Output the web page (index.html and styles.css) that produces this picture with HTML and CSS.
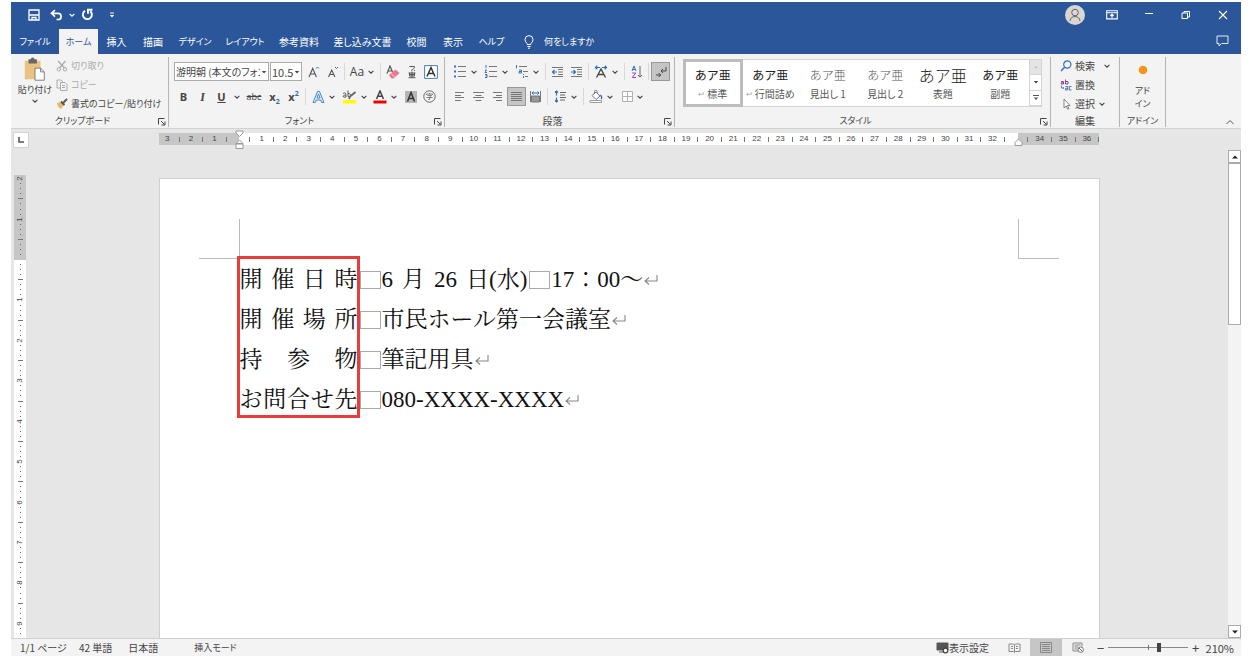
FILE: index.html
```html
<!DOCTYPE html>
<html lang="ja">
<head>
<meta charset="utf-8">
<title>文書</title>
<link rel="stylesheet" href="styles.css">
</head>
<body>
<svg class="defs" aria-hidden="true">
  <symbol id="chev" viewBox="0 0 8 8"><path d="M1.6 2.8 4 5.2 6.4 2.8" fill="none" stroke="currentColor" stroke-width="1.1"/></symbol>
  <symbol id="caret" viewBox="0 0 8 8"><path d="M1.8 3h4.4L4 5.4z" fill="currentColor"/></symbol>
  <symbol id="launch" viewBox="0 0 8 8"><path d="M.5 6.500V.5h6M3 3l3.500 3.500M7 3.500V7H3.500" fill="none" stroke="currentColor"/></symbol>
  <symbol id="ret" viewBox="0 0 16 14"><path d="M14 2v6H2M6 4.500 2 8l4 3.500" fill="none" stroke="currentColor" stroke-width="1.1"/></symbol>
</svg>
<div class="app">
  <header class="titlebar">
    <div class="quick">
      <button class="tb-btn" aria-label="上書き保存"><svg width="12" height="12" viewBox="0 0 12 12"><path d="M1 1h10v10H1zM1 6h10M4 11V8.500h4V11" fill="none" stroke="#fff" stroke-width="1.300"/></svg></button>
      <button class="tb-btn" aria-label="元に戻す"><svg width="13" height="12" viewBox="0 0 13 12"><path d="M5 1 1.500 4.300 5 7.600M1.500 4.300H8a3 3 0 0 1 0 6.200H6.500" fill="none" stroke="#fff" stroke-width="1.700"/></svg></button>
      <button class="tb-chev" aria-label="元に戻す履歴"><svg width="8" height="8"><use href="#chev"/></svg></button>
      <button class="tb-btn redo" aria-label="繰り返し"><svg width="13" height="13" viewBox="0 0 13 13"><path d="M4 2.800A4.500 4.500 0 1 0 9.300 3.200M7 5.800V1.700h4.500" fill="none" stroke="#fff" stroke-width="1.900"/></svg></button>
      <button class="tb-btn" aria-label="クイックアクセスのカスタマイズ"><svg width="8" height="8" viewBox="0 0 8 8"><path d="M2 2h4" stroke="#fff"/><path d="M1.800 4h4.400L4 6.400z" fill="#fff"/></svg></button>
    </div>
    <div class="window-tools">
      <button class="avatar" aria-label="アカウント"><svg width="20" height="20" viewBox="0 0 20 20"><circle cx="10" cy="10" r="10" fill="#d9d6d3"/><circle cx="10" cy="7.500" r="3.300" fill="none" stroke="#666"/><path d="M5 16c0-6 10-6 10 0" fill="none" stroke="#666"/></svg></button>
      <button class="win-btn" aria-label="リボンの表示オプション"><svg width="12" height="10" viewBox="0 0 12 10"><path d="M.7.7h10.600v8.200H.7zM.7 2.700h10.600M6 8V4.300M4.200 6 6 4.200 7.800 6" fill="none" stroke="#fff" stroke-width="1.100"/></svg></button>
      <button class="win-btn" aria-label="最小化"><svg width="10" height="10" viewBox="0 0 10 10"><path d="M1 3.500h8" stroke="#fff"/></svg></button>
      <button class="win-btn" aria-label="元のサイズに戻す"><svg width="10" height="10" viewBox="0 0 10 10"><path d="M1 3h5.500v5.500H1zM3 3V1.500h5.500V7H6.500" fill="none" stroke="#fff"/></svg></button>
      <button class="win-btn" aria-label="閉じる"><svg width="10" height="10" viewBox="0 0 10 10"><path d="m1 1 8 8M9 1 1 9" stroke="#fff" stroke-width="1.100"/></svg></button>
    </div>
  </header>

  <nav class="tabbar">
    <div class="tabs">
      <button class="tab kana">ファイル</button>
      <button class="tab kana active">ホーム</button>
      <button class="tab">挿入</button>
      <button class="tab">描画</button>
      <button class="tab kana">デザイン</button>
      <button class="tab kana">レイアウト</button>
      <button class="tab">参考資料</button>
      <button class="tab">差し込み文書</button>
      <button class="tab">校閲</button>
      <button class="tab">表示</button>
      <button class="tab kana">ヘルプ</button>
    </div>
    <button class="tell kana"><svg width="10" height="14" viewBox="0 0 10 14"><path d="M3.200 9.500C3.200 7.800 1 7 1 4.600a4 4 0 0 1 8 0C9 7 6.800 7.800 6.800 9.500zM3.400 11.500h3.200M4 13.200h2" fill="none" stroke="#fff"/></svg>何をしますか</button>
    <button class="win-btn comment" aria-label="コメント"><svg width="13" height="12" viewBox="0 0 13 12"><path d="M1 1h11v7.500H5.500L3 11V8.500H1z" fill="none" stroke="#e4ebf5"/></svg></button>
  </nav>

  <section class="ribbon">
    <div class="group g-clip">
      <div class="clip-body">
        <button class="paste kana">
          <svg width="26" height="26" viewBox="0 0 26 28"><path d="M2 4h17v20H2z" fill="#eac282"/><path d="M6 2.500h2.500a2 2 0 0 1 4 0H15V7H6z" fill="#666"/><path d="M13 12h6l4 4v9H13z" fill="#fff" stroke="#777"/><path d="M19 12v4h4" fill="none" stroke="#777"/></svg>
          <span>貼り付け</span>
          <svg width="8" height="8"><use href="#chev"/></svg>
        </button>
        <div class="clip-list kana">
          <button class="item off"><svg width="12" height="12" viewBox="0 0 12 12"><path d="m2 1 6.500 7M9.500 1 3.500 8" stroke="#aaa" stroke-width="1.300"/><circle cx="2.800" cy="9.300" r="1.700" fill="none" stroke="#aaa"/><circle cx="9" cy="9.300" r="1.700" fill="none" stroke="#aaa"/></svg>切り取り</button>
          <button class="item off"><svg width="12" height="12" viewBox="0 0 12 12"><path d="M4 9H1V1h4l2 2v1M4.500 3.500H9l2 2v6H4.500zM6 6.500h3M6 8.500h3" fill="none" stroke="#aaa"/></svg>コピー</button>
          <button class="item"><svg width="12" height="12" viewBox="0 0 12 12"><path d="m1 5 4-1 3 3-3 4c-2-1-4-3-4-6z" fill="#e9b96a"/><path d="m5 3.500 3.500 3.500M7.500 4.500 11 1" stroke="#555" stroke-width="1.800"/></svg>書式のコピー/貼り付け</button>
        </div>
      </div>
      <div class="caption kana">クリップボード<button class="launch" aria-label="クリップボードの詳細"><svg width="8" height="8"><use href="#launch"/></svg></button></div>
    </div>

    <div class="group g-font">
      <div class="rows">
        <div class="row">
          <label class="combo name"><select aria-label="フォント"><option>游明朝 (本文のフォント)</option></select><svg width="8" height="8"><use href="#caret"/></svg></label>
          <label class="combo size"><select aria-label="フォント サイズ"><option>10.5</option></select><svg width="8" height="8"><use href="#caret"/></svg></label>
          <button class="btn" aria-label="フォントの拡大"><svg width="12" height="14" viewBox="0 0 12 14"><path d="M1 12 4.700 3.500 8.400 12M2.300 9h4.800" fill="none" stroke="#555" stroke-width="1.100"/><path d="M8 3.500 9.500 2 11 3.500" fill="none" stroke="#2f6db5"/></svg></button>
          <button class="btn" aria-label="フォントの縮小"><svg width="12" height="14" viewBox="0 0 12 14"><path d="M1.500 12 4.700 5 7.900 12M2.700 9.500h4" fill="none" stroke="#555" stroke-width="1.100"/><path d="M8 2 9.500 3.500 11 2" fill="none" stroke="#2f6db5"/></svg></button>
          <i class="sep"></i>
          <button class="btn drop"><span class="glyph">Aa</span><svg width="8" height="8"><use href="#chev"/></svg></button>
          <i class="sep"></i>
          <button class="btn" aria-label="書式のクリア"><svg width="14" height="14" viewBox="0 0 14 14"><path d="M1 8.500 4 1l2.500 6M2 6h4" fill="none" stroke="#555" stroke-width="1.200"/><path d="m3 10 6.500-5.500 4 3.500-6 5.500H5.500z" fill="#e8798c"/><path d="m5 8.500 4 4" stroke="#fbd9df"/></svg></button>
          <button class="btn" aria-label="ルビ"><svg width="12" height="14" viewBox="0 0 12 14"><path d="M3.500 1.500h5C8.500 3.500 7 4.500 5 5.500M8 5l1 .8M2.500 8h7M6 6.500v6M3.500 8v3h5V8M3.500 9.500h5M2.500 12.700h7" fill="none" stroke="#555"/></svg></button>
          <button class="btn" aria-label="囲み線"><svg width="14" height="14" viewBox="0 0 14 14"><path d="M.6.600h12.800v12.800H.6z" fill="#fff" stroke="#4a7ebb"/><path d="M3 11.500 7 2.500l4 9M4.300 8.500h5.400" fill="none" stroke="#333" stroke-width="1.500"/></svg></button>
        </div>
        <div class="row">
          <button class="btn"><b class="glyph">B</b></button>
          <button class="btn"><i class="glyph ital">I</i></button>
          <button class="btn"><b class="glyph under">U</b></button>
          <button class="chev-btn" aria-label="下線の種類"><svg width="8" height="8"><use href="#chev"/></svg></button>
          <button class="btn wide"><s class="glyph tiny">abc</s></button>
          <button class="btn"><b class="glyph">x<sub class="blue">2</sub></b></button>
          <button class="btn"><b class="glyph">x<sup class="blue">2</sup></b></button>
          <i class="sep"></i>
          <button class="btn drop" aria-label="文字の効果"><svg width="13" height="14" viewBox="0 0 13 14"><path d="M1 12.500 5.500 1.500h2l4.500 11h-2.300L8.700 10H4.300l-1 2.500z" fill="#dce9f8" stroke="#4a86c8"/><path d="m5 8 1.500-4L8 8z" fill="#fff" stroke="#4a86c8"/></svg><svg width="8" height="8"><use href="#chev"/></svg></button>
          <button class="btn drop" aria-label="蛍光ペン"><svg width="15" height="14" viewBox="0 0 15 14"><path d="M1 3.500c2.500-1.500 3-.5 3 3.500-3.500 1-4-2 0-2M6 .5v6c3.500 1 3.500-3.500 0-3" fill="none" stroke="#555"/><path d="m7 9 1-2.500L13.500 2" fill="none" stroke="#666" stroke-width="1.800"/><path d="M1 10h13v3.500H1z" fill="#ff0"/></svg><svg width="8" height="8"><use href="#chev"/></svg></button>
          <button class="btn drop" aria-label="フォントの色"><svg width="14" height="14" viewBox="0 0 14 14"><path d="M3.500 9 7 1l3.500 8M4.700 6.200h4.600" fill="none" stroke="#444" stroke-width="1.500"/><path d="M.5 10.500h13v3H.5z" fill="#e00"/></svg><svg width="8" height="8"><use href="#chev"/></svg></button>
          <button class="btn" aria-label="文字の網かけ"><svg width="12" height="12" viewBox="0 0 12 12"><path d="M0 0h12v12H0z" fill="#b5b5b5"/><path d="m2.500 10.500 3.500-9 3.500 9M3.800 7.500h4.400" fill="none" stroke="#333" stroke-width="1.500"/></svg></button>
          <button class="btn" aria-label="囲い文字"><svg width="13" height="13" viewBox="0 0 13 13"><circle cx="6.500" cy="6.500" r="5.700" fill="none" stroke="#666"/><path d="M3.500 5V4h6v1M6.500 3v1M4.500 5.500h4l-2 1.500v2.500H5.300M3.500 7.500h6" fill="none" stroke="#666" stroke-width=".8"/></svg></button>
        </div>
      </div>
      <div class="caption kana">フォント<button class="launch" aria-label="フォントの詳細"><svg width="8" height="8"><use href="#launch"/></svg></button></div>
    </div>

    <div class="group g-para">
      <div class="rows">
        <div class="row">
          <button class="btn drop" aria-label="箇条書き"><svg width="14" height="13" viewBox="0 0 14 13"><path d="M5 1.500h8M5 6.500h8M5 11.500h8" stroke="#777"/><path d="M1 1.500h2M1 6.500h2M1 11.500h2" stroke="#3a74b8" stroke-width="1.800"/></svg><svg width="8" height="8"><use href="#chev"/></svg></button>
          <button class="btn drop" aria-label="段落番号"><svg width="14" height="13" viewBox="0 0 14 13"><path d="M5 1.500h8M5 6.500h8M5 11.500h8" stroke="#777"/><path d="M2 0v3M1 5h1.500L1 7.500h2M1 9.500h2v3H1M1.500 11H3" fill="none" stroke="#3a74b8"/></svg><svg width="8" height="8"><use href="#chev"/></svg></button>
          <button class="btn drop" aria-label="アウトライン"><svg width="14" height="13" viewBox="0 0 14 13"><path d="M4 1.500h8M8 6.500h5M10 11.500h3" stroke="#777"/><path d="M1.500 0v3.500M4 5h2.500v3H4V6.500h2.500M8.500 9v1M8.500 11v2" fill="none" stroke="#3a74b8"/></svg><svg width="8" height="8"><use href="#chev"/></svg></button>
          <i class="sep"></i>
          <button class="btn" aria-label="インデントを減らす"><svg width="13" height="12" viewBox="0 0 13 12"><path d="M1 1.500h11M7 3.500h5M7 6h5M7 8.500h5M1 10.500h11" stroke="#777"/><path d="M6 6H1.500M3.500 4l-2 2 2 2" fill="none" stroke="#2f6db5" stroke-width="1.200"/></svg></button>
          <button class="btn" aria-label="インデントを増やす"><svg width="13" height="12" viewBox="0 0 13 12"><path d="M1 1.500h11M7 3.500h5M7 6h5M7 8.500h5M1 10.500h11" stroke="#777"/><path d="M1 6h4.500M3.500 4l2 2-2 2" fill="none" stroke="#2f6db5" stroke-width="1.200"/></svg></button>
          <i class="sep"></i>
          <button class="btn drop" aria-label="拡張書式"><svg width="14" height="13" viewBox="0 0 14 13"><path d="M2.500 12.500 7 4l4.500 8.500M4 9.500h6" fill="none" stroke="#444" stroke-width="1.300"/><path d="M6 2.500H1.500M3.300.7 1.500 2.500l1.800 1.800M8 2.500h4.500M10.700.7l1.800 1.800-1.800 1.800" fill="none" stroke="#2f6db5" stroke-width="1.200"/></svg><svg width="8" height="8"><use href="#chev"/></svg></button>
          <i class="sep"></i>
          <button class="btn" aria-label="並べ替え"><svg width="12" height="14" viewBox="0 0 12 14"><path d="m1 6 2-5 2 5M1.700 4.500h2.600" fill="none" stroke="#2f6db5"/><path d="M1.200 8h3.600L1.200 12.500H5" fill="none" stroke="#a044b0"/><path d="M9 1v11M7 10l2 2.200 2-2.200" fill="none" stroke="#666"/></svg></button>
          <i class="sep"></i>
          <button class="btn on" aria-label="編集記号の表示"><svg width="12" height="12" viewBox="0 0 12 12"><path d="M11 1v4H6M8 3 6 5l2 2M1 9h4.500M3.700 7l2 2-2 2" fill="none" stroke="#444"/></svg></button>
        </div>
        <div class="row">
          <button class="btn" aria-label="左揃え"><svg width="11" height="9" viewBox="0 0 11 9"><path d="M1 .5h9M1 3.500h6M1 5.500h9M1 8.500h6" stroke="#777"/></svg></button>
          <button class="btn" aria-label="中央揃え"><svg width="11" height="9" viewBox="0 0 11 9"><path d="M0 .5h11M2.500 3.500h6M0 5.500h11M2.500 8.500h6" stroke="#777"/></svg></button>
          <button class="btn" aria-label="右揃え"><svg width="11" height="9" viewBox="0 0 11 9"><path d="M1 .5h9M4 3.500h6M1 5.500h9M4 8.500h6" stroke="#777"/></svg></button>
          <button class="btn on" aria-label="両端揃え"><svg width="11" height="9" viewBox="0 0 11 9"><path d="M0 .5h11M0 2.500h11M0 4.500h11M0 6.500h11M0 8.500h11" stroke="#777"/></svg></button>
          <button class="btn" aria-label="均等割り付け"><svg width="13" height="13" viewBox="0 0 13 13"><path d="M1.500 1v11M11.500 1v11" stroke="#777"/><path d="M2.500 6h8v6h-8z" fill="#999" stroke="#777"/><path d="M3 3h7M4.500 1.500 3 3l1.500 1.500M8.500 1.500 10 3 8.500 4.500" fill="none" stroke="#2f6db5"/></svg></button>
          <i class="sep"></i>
          <button class="btn drop" aria-label="行間"><svg width="13" height="13" viewBox="0 0 13 13"><path d="M6 2.500h6M6 5h5M6 7.500h6M6 10h5" stroke="#666"/><path d="M2.500 1v4.500M1 2.500 2.500 1 4 2.500M2.500 7.500V12M1 10.500 2.500 12 4 10.500" fill="none" stroke="#2f6db5" stroke-width="1.200"/></svg><svg width="8" height="8"><use href="#chev"/></svg></button>
          <i class="sep"></i>
          <button class="btn drop" aria-label="塗りつぶし"><svg width="14" height="13" viewBox="0 0 14 13"><path d="M3 5.500 7 2l4 4-4 3.500zM5.500 4V1.500a1.200 1.200 0 0 1 2.500 0V3" fill="#fff" stroke="#777"/><path d="M11.500 5c1.500 2 1.500 3.500.5 4" fill="none" stroke="#2f6db5" stroke-width="1.300"/><path d="M1 10.500h11.500v2H1z" fill="#fff" stroke="#888" stroke-width=".8"/></svg><svg width="8" height="8"><use href="#chev"/></svg></button>
          <button class="btn drop" aria-label="罫線"><svg width="11" height="11" viewBox="0 0 11 11"><path d="M.5.500h10v10H.5zM5.500.5v10M.5 5.500h10" fill="#fff" stroke="#b0b0b0"/></svg><svg width="8" height="8"><use href="#chev"/></svg></button>
        </div>
      </div>
      <div class="caption">段落<button class="launch" aria-label="段落の詳細"><svg width="8" height="8"><use href="#launch"/></svg></button></div>
    </div>

    <div class="group g-style">
      <div class="gallery">
        <button class="style sel"><span class="sample">あア亜</span><span class="style-name"><svg width="6" height="6" viewBox="0 0 16 14"><use href="#ret"/></svg>標準</span></button>
        <button class="style"><span class="sample">あア亜</span><span class="style-name"><svg width="6" height="6" viewBox="0 0 16 14"><use href="#ret"/></svg>行間詰め</span></button>
        <button class="style"><span class="sample light">あア亜</span><span class="style-name">見出し 1</span></button>
        <button class="style"><span class="sample light">あア亜</span><span class="style-name">見出し 2</span></button>
        <button class="style"><span class="sample big">あア亜</span><span class="style-name">表題</span></button>
        <button class="style"><span class="sample">あア亜</span><span class="style-name">副題</span></button>
        <div class="gal-scroll">
          <button class="dim" aria-label="前の行"><svg width="8" height="8" viewBox="0 0 8 8"><path d="M2.500 4.800h3L4 3.300z" fill="#aaa"/></svg></button>
          <button aria-label="次の行"><svg width="8" height="8"><use href="#caret"/></svg></button>
          <button aria-label="その他"><svg width="8" height="8" viewBox="0 0 8 8"><path d="M1 1.500h6" stroke="#555"/><path d="M1.800 3.500h4.400L4 6z" fill="#555"/></svg></button>
        </div>
      </div>
      <div class="caption kana">スタイル<button class="launch" aria-label="スタイルの詳細"><svg width="8" height="8"><use href="#launch"/></svg></button></div>
    </div>

    <div class="group g-edit">
      <div class="clip-list">
        <button class="item"><svg width="12" height="12" viewBox="0 0 12 12"><circle cx="7.300" cy="4.500" r="3.600" fill="none" stroke="#2f6db5" stroke-width="1.200"/><path d="M4.600 7.200 1 11" stroke="#2f6db5" stroke-width="1.400"/></svg>検索<svg class="far" width="8" height="8"><use href="#chev"/></svg></button>
        <button class="item"><svg width="12" height="12" viewBox="0 0 12 12"><path d="M1 2.500h2.500V5H1.200V3.800h2.300M5.500.500V5H8V2.500H5.500" fill="none" stroke="#8d3fae"/><path d="M1.500 6.500v2.500h2M2.800 8l1 1-1 1" fill="none" stroke="#2f6db5" stroke-width=".8"/><path d="M5.500 7.500h2.200V11H5.500V9.300h2.200M11.500 7.500H9.300V11h2.200" fill="none" stroke="#5577aa"/></svg>置換</button>
        <button class="item"><svg width="12" height="12" viewBox="0 0 12 12"><path d="M4 1v9l2.200-2 1.500 3.300 1.200-.6-1.500-3.200H10z" fill="#fff" stroke="#777" stroke-width=".9"/></svg>選択<svg width="8" height="8"><use href="#chev"/></svg></button>
      </div>
      <div class="caption">編集</div>
    </div>

    <div class="group g-addin">
      <button class="addin kana"><svg width="10" height="10" viewBox="0 0 10 10"><circle cx="5" cy="5" r="4.300" fill="#f7941d"/></svg><span>アド<br>イン</span></button>
      <div class="caption kana">アドイン</div>
    </div>
    <button class="collapse" aria-label="リボンを折りたたむ"><svg width="10" height="8" viewBox="0 0 10 8"><path d="M1.500 6 5 2.500 8.500 6" fill="none" stroke="#555"/></svg></button>
  </section>

  <div class="ruler-bar">
    <button class="tab-kind" aria-label="タブの種類"><svg width="6" height="6" viewBox="0 0 6 6"><path d="M1 0v5h5" fill="none" stroke="#555" stroke-width="1.600"/></svg></button>
    <div class="ruler-track">
      <div class="ruler">
        <div class="ruler-clip"><div class="h-strip" id="h-strip"></div></div>
        <svg class="marker left" width="9" height="20" viewBox="0 0 9 20"><path d="M1 1h7v2L4.500 6.500 1 3zM4.500 10 8 13.500H1zM1 14h7v4.500H1z" fill="#fff" stroke="#999"/></svg>
        <svg class="marker right" width="9" height="9" viewBox="0 0 9 9"><path d="M4.500 1 8 4.500v3H1v-3z" fill="#fff" stroke="#999"/></svg>
      </div>
    </div>
  </div>

  <main class="work">
    <div class="v-ruler"><div class="v-strip" id="v-strip"></div></div>
    <div class="canvas">
      <article class="page">
        <div class="corners"><i class="corner tl"></i><i class="corner tr"></i></div>
        <div class="doc">
          <p class="line"><span class="key"><span>開</span><span>催</span><span>日</span><span>時</span></span><i class="space"></i><span class="mixed"><span>6</span><span>月</span><span>26</span><span>日(水)</span></span><i class="space"></i><span>17：00～</span><svg class="ret" width="16" height="14"><use href="#ret"/></svg></p>
          <p class="line"><span class="key"><span>開</span><span>催</span><span>場</span><span>所</span></span><i class="space"></i><span>市民ホール第一会議室</span><svg class="ret" width="16" height="14"><use href="#ret"/></svg></p>
          <p class="line"><span class="key"><span>持</span><span>参</span><span>物</span></span><i class="space"></i><span>筆記用具</span><svg class="ret" width="16" height="14"><use href="#ret"/></svg></p>
          <p class="line"><span class="key"><span>お</span><span>問</span><span>合</span><span>せ</span><span>先</span></span><i class="space"></i><span>080-XXXX-XXXX</span><svg class="ret" width="16" height="14"><use href="#ret"/></svg></p>
          <div class="highlight"></div>
        </div>
      </article>
    </div>
    <div class="scroll">
      <button aria-label="上へスクロール"><svg width="8" height="8" viewBox="0 0 8 8"><path d="M1 5.500h6L4 2.500z" fill="#222"/></svg></button>
      <div class="rail"><div class="thumb"></div></div>
      <button aria-label="下へスクロール"><svg width="8" height="8" viewBox="0 0 8 8"><path d="M1 2.500h6L4 5.500z" fill="#222"/></svg></button>
    </div>
  </main>

  <footer class="status">
    <span class="pages">1/1 ページ</span><span>42 単語</span><span class="lang">日本語</span><span class="kana">挿入モード</span>
    <div class="views">
      <button class="display"><svg width="13" height="12" viewBox="0 0 13 12"><path d="M1 1h11v7H1zM3 10h5" fill="#555" stroke="#555"/><circle cx="9.500" cy="8.500" r="2.300" fill="#fff" stroke="#444" stroke-width="1.300"/></svg>表示設定</button>
      <button class="view" aria-label="閲覧モード"><svg width="13" height="10" viewBox="0 0 13 10"><path d="M1 1h4.500l1 1 1-1H12v7.500H7.500l-1 1-1-1H1zM6.500 2v7M3 3.500h2M3 5.500h2M8 3.500h2M8 5.500h2" fill="none" stroke="#888"/></svg></button>
      <button class="view cur" aria-label="印刷レイアウト"><svg width="12" height="11" viewBox="0 0 12 11"><path d="M.5.500h11v10H.5zM2 2.500h8M2 4.500h8M2 6.500h8M2 8.500h8" fill="none" stroke="#888"/></svg></button>
      <button class="view" aria-label="Web レイアウト"><svg width="12" height="11" viewBox="0 0 12 11"><path d="M6 9H1V1h9v3.500M2.500 3h6M2.500 5h4M2.500 7h3" fill="none" stroke="#888"/><circle cx="8.700" cy="7.700" r="2.700" fill="#fff" stroke="#777"/><path d="m7 6 3.500 3.500" stroke="#777"/></svg></button>
      <button class="zoom-btn" aria-label="縮小">−</button>
      <input class="zoom" type="range" min="0" max="100" value="65" aria-label="ズーム">
      <button class="zoom-btn" aria-label="拡大">+</button>
      <span class="percent">210%</span>
    </div>
  </footer>
</div>
<script src="rulers.js"></script>
</body>
</html>
```
FILE: rulers.js
```js
// Horizontal ruler: one cell per character, counted from the left margin.
const h = document.getElementById('h-strip');
for (let n = -3; n <= 36; n++) {
  const cell = document.createElement('div');
  cell.className = 'h-cell';
  const label = document.createElement('span');
  label.textContent = n === 0 || n === 33 ? '' : Math.abs(n);
  cell.append(label);
  h.append(cell);
}
// Vertical ruler: a half-unit dash, then dots on both sides of each number.
const v = document.getElementById('v-strip');
for (let n = -2; n <= 9; n++) {
  const cell = document.createElement('div');
  cell.className = 'v-cell';
  for (const kind of ['dash', 'dot', 'dot', 'dot', 'num', 'dot', 'dot', 'dot']) {
    const mark = document.createElement('span');
    mark.className = kind;
    if (kind === 'num' && n !== 0) mark.textContent = Math.abs(n);
    cell.append(mark);
  }
  v.append(cell);
}
```
FILE: styles.css
```css
* { box-sizing: border-box; }
body {
  margin: 0;
  background: #fff;
  color: #444;
  font: 10px/14px "Noto Sans CJK JP", "Noto Sans", sans-serif;
  font-feature-settings: "palt";
}
button, select, input { font: inherit; color: inherit; font-feature-settings: inherit; }
button { border: 0; padding: 0; background: none; display: flex; align-items: center; justify-content: center; white-space: nowrap; }
svg { flex: none; display: block; }
.kana { font-size: 9px; }
.defs { position: absolute; width: 0; height: 0; }
.app {
  display: flex;
  flex-direction: column;
  height: 100vh;
  border: solid #fff;
  border-width: 2px 12px 3px 11px;
  background: #e6e6e6;
  overflow: hidden;
}

/* Title bar and tabs */
.titlebar { display: flex; justify-content: space-between; align-items: center; height: 27px; padding-bottom: 2px; background: #2b579a; color: #fff; }
.quick { display: flex; align-items: center; padding-left: 11px; }
.tb-btn { width: 23px; height: 24px; }
.tb-chev { width: 8px; }
.redo { margin-right: 1px; }
.window-tools { display: flex; align-items: center; }
.avatar { margin-right: 8px; }
.win-btn { width: 37px; height: 24px; }
.tabbar { display: flex; align-items: stretch; height: 25px; background: #2b579a; color: #fff; }
.tabs { display: grid; grid-template-columns: 48px 39px 37px 36px 48px 52px 56px 71px 37px 36px 41px; }
.tab.active { background: #f3f3f3; color: #2b579a; }
.tell { gap: 10px; margin-left: 12px; }
.comment { margin-left: auto; }

/* Ribbon */
.ribbon { display: flex; height: 75px; padding-top: 3px; background: #f3f3f3; border-bottom: 1px solid #d2d2d2; }
.group { display: flex; flex-direction: column; justify-content: space-between; flex: none; height: 70px; border-right: 1px solid #b4b4b4; }
.g-clip { width: 158px; }
.g-font { width: 276px; }
.g-para { width: 230px; }
.g-style { width: 376px; }
.g-edit { width: 69px; }
.g-addin { width: 46px; }
.caption { position: relative; text-align: center; height: 13px; padding-right: 14px; }
.g-edit .caption, .g-addin .caption { padding-right: 0; }
.launch { position: absolute; right: 2px; top: 4px; }
.clip-body { display: flex; gap: 3px; padding-left: 6px; }
.paste { flex-direction: column; width: 36px; justify-content: flex-start; }
.clip-list { display: flex; flex-direction: column; align-items: flex-start; }
.item { height: 19px; gap: 3px; padding-bottom: 2px; }
.item.off { color: #aaa; }
.far { margin-left: 5px; }
.g-edit .clip-list { padding-left: 9px; }
.rows { display: flex; flex-direction: column; padding: 2px 0 0 5px; }
.row { display: flex; align-items: center; height: 25px; }
.btn { width: 19px; height: 19px; }
.btn.wide { width: 22px; }
.btn.drop { width: 31px; gap: 3px; }
.btn.on { background: #c5c5c5; border: 1px solid #999; }
.chev-btn { width: 12px; height: 19px; }
.sep { width: 1px; height: 17px; margin: 0 2px; background: #d8d8d8; }
.glyph { font: 12px/14px "Open Sans", sans-serif; white-space: nowrap; }
b.glyph { font-weight: 700; font-size: 11px; }
.glyph.tiny { font-size: 9px; }
.glyph.ital { font: italic 700 12px/14px "Liberation Serif", serif; }
.under { text-decoration: underline; }
.glyph sup, .glyph sub { font-size: 7px; line-height: 0; }
.blue { color: #2f6db5; }
.combo { display: flex; align-items: center; height: 19px; background: #fff; border: 1px solid #ababab; }
.combo select { flex: 1; min-width: 0; appearance: none; border: 0; padding: 0 0 0 1px; background: none; overflow: hidden; }
.combo.name { width: 95px; margin-right: 1px; }
.combo.size { width: 32px; margin-right: 2px; }
.combo.size select { font-size: 11px; }
.gallery { display: flex; height: 48px; margin: 2px 8px 0; background: #fff; border: 1px solid #d4d4d4; }
.style { flex: 1; flex-direction: column; color: #555; gap: 3px; }
.style.sel { outline: 3px solid #bdbdbd; outline-offset: -2px; }
.sample { font-size: 12px; line-height: 18px; color: #222; font-feature-settings: normal; }
.sample.light { font-weight: 300; color: #555; }
.sample.big { font-size: 16px; font-weight: 300; }
.style-name { display: flex; align-items: center; gap: 3px; }
.gal-scroll { display: flex; flex-direction: column; width: 12px; border-left: 1px solid #d4d4d4; }
.gal-scroll button { flex: 1; border-bottom: 1px solid #d4d4d4; }
.gal-scroll .dim { background: #e4e4e4; }
.addin { flex-direction: column; gap: 9px; padding-top: 8px; line-height: 13px; }
.collapse { align-self: flex-end; width: 22px; height: 12px; margin-left: auto; }

/* Rulers */
.ruler-bar { display: flex; align-items: flex-start; height: 21px; padding-top: 3px; flex: none; }
.tab-kind { width: 16px; height: 16px; flex: none; margin-left: 2px; background: #fff; border: 1px solid #d4d4d4; }
.ruler-track { flex: 1; display: flex; justify-content: center; margin-right: 12px; }
.ruler { position: relative; width: 100%; max-width: 940px; }
.ruler-clip {
  height: 12px;
  margin-top: 1px;
  overflow: hidden;
  background: linear-gradient(to right, #c6c6c6 80px, #fff 80px, #fff calc(100% - 81px), #c6c6c6 calc(100% - 81px));
}
.h-strip { display: flex; margin-left: -3px; height: 12px; }
.h-cell { display: flex; flex: 1; align-items: center; font: 8px/12px "Liberation Sans", sans-serif; }
.h-cell span { flex: 1; text-align: center; }
.h-cell::after { content: ""; width: 1px; height: 5px; background: #777; }
.marker { position: absolute; }
.marker.left { left: 76px; top: -2px; }
.marker.right { right: 76px; top: 6px; }
.work { flex: 1; min-height: 0; display: flex; }
.v-ruler { width: 12px; flex: none; margin: 25px 1px 0 3px; overflow: hidden; background: linear-gradient(#c6c6c6 85px, #fff 85px); }
.v-strip { display: flex; flex-direction: column; height: 485px; margin-top: -19px; }
.v-cell { flex: 1; display: flex; flex-direction: column; }
.v-cell span { flex: 1 1 0; min-height: 0; display: flex; align-items: center; justify-content: center; }
.v-cell .dot::before { content: ""; width: 1px; height: 1px; background: #666; }
.v-cell .dash::before { content: ""; width: 5px; height: 1px; background: #777; }
.v-cell .num { font: 8px/5px "Liberation Sans", sans-serif; transform: rotate(-90deg); }

/* Document */
.canvas { flex: 1; min-width: 0; display: flex; justify-content: center; padding: 28px 0 0 3px; overflow: hidden; }
.page { width: 100%; max-width: 941px; background: #fff; border: 1px solid #cfcfcf; border-bottom: 0; }
.corners { display: flex; justify-content: space-between; padding: 40px 40px 0 39px; }
.corner { width: 41px; height: 40px; border-bottom: 1px solid #bbb; }
.corner.tl { border-right: 1px solid #bbb; }
.corner.tr { border-left: 1px solid #bbb; }
.doc {
  position: relative;
  padding: 1px 0 0 80px;
  color: #111;
  font: 400 23px/40px "Liberation Serif", "Noto Serif CJK JP", "Noto Sans CJK JP", serif;
  font-feature-settings: normal;
}
.line { display: flex; align-items: center; height: 40px; margin: 0; white-space: nowrap; }
.key { display: flex; justify-content: space-between; width: 118px; }
.mixed { display: flex; gap: 9px; }
.space { width: 21px; height: 18px; margin: 0 1px 0 2px; border: 1px solid #aaa; }
.ret { color: #888; }
.highlight { position: absolute; left: 77px; top: -3px; width: 123px; height: 162px; border: 3px solid #e83d3d; }

.scroll { width: 13px; flex: none; display: flex; flex-direction: column; background: #f3f3f3; }
.scroll button { height: 13px; flex: none; background: #fff; border: 1px solid #ababab; }
.rail { flex: 1; }
.thumb { height: 35%; background: #fff; border: 1px solid #ababab; }

/* Status bar */
.status { display: flex; align-items: center; flex: none; height: 18px; gap: 16px; padding: 0 7px 0 9px; background: #f3f3f3; border-top: 1px solid #d0d0d0; }
.pages { margin-right: -4px; }
.lang { margin-right: 20px; }
.views { display: flex; align-items: center; margin-left: auto; height: 17px; }
.display { margin-right: 9px; }
.view { width: 32px; height: 17px; }
.view.cur { background: #c6c6c6; }
.zoom-btn { width: 13px; font-size: 13px; }
.zoom { appearance: none; width: 80px; height: 11px; margin: 0 1px; background: linear-gradient(#777, #777) 50% 50% / 1px 5px no-repeat, linear-gradient(#888, #888) 50% 50% / 100% 1px no-repeat; }
.zoom::-webkit-slider-thumb { appearance: none; width: 4px; height: 9px; background: #444; }
.percent { width: 32px; text-align: right; font-size: 11px; }
```
